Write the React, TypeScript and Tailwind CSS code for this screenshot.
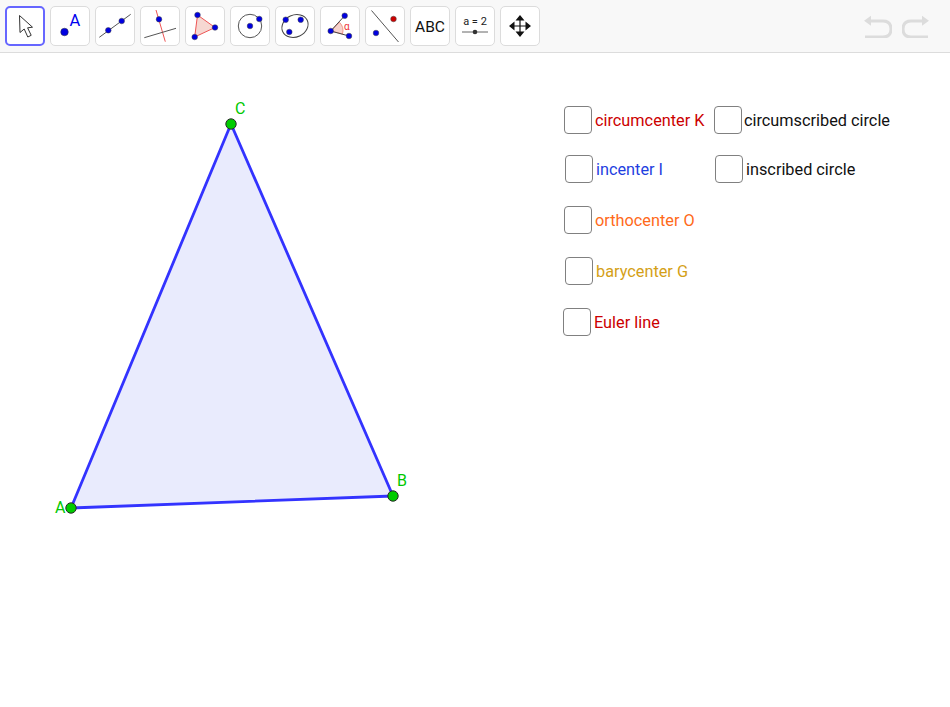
import React from "react";

const Dot = ({ x, y, r = 2.8, c = "#0000e0" }: { x: number; y: number; r?: number; c?: string }) => (
  <circle cx={x} cy={y} r={r} fill={c} stroke="#444" strokeWidth={0.5} />
);

function ToolButton({ x, active, children }: { x: number; active?: boolean; children?: React.ReactNode }) {
  return (
    <button
      className={
        active
          ? "w-10 h-10 bg-white rounded-[5px] border-2 border-[#6666ff] shrink-0 relative"
          : "w-10 h-10 bg-white rounded-[5px] border border-[#dcdcdc] shrink-0 relative"
      }
    >
      <svg className="absolute left-[-2px] top-[-2px] w-10 h-10 data-[p=n]:left-[-1px] data-[p=n]:top-[-1px]" data-p={active ? "a" : "n"} viewBox={`${x} 6 40 40`}>
        {children}
      </svg>
    </button>
  );
}

function Option({
  pos,
  color,
  children,
}: {
  pos: string;
  color: string;
  children: string;
}) {
  return (
    <label className={`absolute flex items-center text-[16.3px] leading-[26px] whitespace-nowrap ${pos} ${color}`}>
      <span className="w-7 h-7 bg-white rounded-[4px] border-[1.5px] border-[#808080] shrink-0" />
      <span className="pt-[2px]">{children}</span>
    </label>
  );
}

export default function App() {
  return (
    <div className="w-[950px] h-[707px] bg-white overflow-hidden flex flex-col font-['Roboto',sans-serif]">
      <header className="h-[53px] shrink-0 bg-[#f8f8f8] border-b border-[#dcdcdc] flex items-start pt-1.5 pl-[5px] pr-[20px]">
        <div className="flex gap-[5px]">
          <ToolButton x={5} active>
            <path d="M19.5 15.5 L20 32.5 L24.2 29 L27.8 37 L31.2 35.3 L27.6 27.8 L32.5 27.2 Z" fill="#fff" stroke="#333" strokeWidth="1" strokeLinejoin="round" />
          </ToolButton>
          <ToolButton x={50}>
            <circle cx={64.5} cy={32} r={3.8} fill="#0000e0" stroke="#333" strokeWidth={0.5} />
            <text x={69.5} y={25.5} fontFamily="Roboto, sans-serif" fontSize={16.5} fill="#0000ee">A</text>
          </ToolButton>
          <ToolButton x={95}>
            <line x1={99.3} y1={37.3} x2={130.7} y2={14.3} stroke="#555" strokeWidth={1} />
            <Dot x={108.3} y={30.3} />
            <Dot x={121.7} y={21} />
          </ToolButton>
          <ToolButton x={140}>
            <line x1={156} y1={10} x2={165.3} y2={41.7} stroke="#ee5555" strokeWidth={1} />
            <line x1={144.3} y1={37.7} x2={176} y2={28.3} stroke="#555" strokeWidth={1} />
            <Dot x={159} y={19.3} />
          </ToolButton>
          <ToolButton x={185}>
            <polygon points="197.5,15 215,27.5 194.7,37" fill="#f6d8d2" stroke="#ee5555" strokeWidth={1} />
            <Dot x={197.5} y={15} />
            <Dot x={215} y={27.5} />
            <Dot x={194.7} y={37} />
          </ToolButton>
          <ToolButton x={230}>
            <circle cx={250} cy={26} r={11.7} fill="none" stroke="#555" strokeWidth={1} />
            <Dot x={250} y={26} />
            <Dot x={259.3} y={19} />
          </ToolButton>
          <ToolButton x={275}>
            <ellipse cx={295} cy={26} rx={13.5} ry={11} transform="rotate(-25 295 26)" fill="none" stroke="#444" strokeWidth={1} />
            <Dot x={285.7} y={19.7} />
            <Dot x={300.7} y={19.7} />
            <Dot x={289.3} y={32} />
          </ToolButton>
          <ToolButton x={320}>
            <path d="M331 31 L339.5 22.3 A12 12 0 0 1 342.5 34 Z" fill="#f6d2cc" stroke="#ee7766" strokeWidth={0.7} />
            <polyline points="344.7,15.7 330.7,31 349,36" fill="none" stroke="#444" strokeWidth={1} />
            <Dot x={330.7} y={31} />
            <Dot x={344.7} y={15.7} />
            <Dot x={349} y={36} />
            <text x={344} y={29.5} fontFamily="Roboto, sans-serif" fontSize={10} fill="#ee3333">α</text>
          </ToolButton>
          <ToolButton x={365}>
            <line x1={371.5} y1={10.5} x2={398.5} y2={42} stroke="#555" strokeWidth={1} />
            <Dot x={376} y={33} />
            <Dot x={393.5} y={19} c="#cc0000" />
          </ToolButton>
          <ToolButton x={410}>
            <text x={430} y={31.5} textAnchor="middle" fontFamily="Roboto, sans-serif" fontSize={15.5} fill="#111">ABC</text>
          </ToolButton>
          <ToolButton x={455}>
            <text x={475} y={25} textAnchor="middle" fontFamily="Roboto, sans-serif" fontSize={11} fill="#222">a = 2</text>
            <line x1={462} y1={32} x2={488} y2={32} stroke="#666" strokeWidth={1} />
            <circle cx={475} cy={32} r={2.3} fill="#333" />
          </ToolButton>
          <ToolButton x={500}>
            <path d="M520 17 V35 M511 26 H529" stroke="#111" strokeWidth={1.2} />
            <path d="M520 15 L524.5 20.5 H515.5 Z M520 37 L524.5 31.5 H515.5 Z M509 26 L514.5 21.5 V30.5 Z M531 26 L525.5 21.5 V30.5 Z" fill="#111" />
          </ToolButton>
        </div>
        <div className="ml-auto flex gap-[10px] mt-[8px]">
          <svg className="w-7 h-6" viewBox="865 14 28 24">
            <path d="M871 21 H884 Q892 21 892 29 Q892 37 884 37 H866" fill="none" stroke="#dcdcdc" strokeWidth={3} />
            <path d="M865 20.7 L872 15.7 V25.7 Z" fill="#dcdcdc" />
          </svg>
          <svg className="w-7 h-6" viewBox="902 14 28 24">
            <path d="M923 21 H911 Q903 21 903 29 Q903 37 911 37 H928" fill="none" stroke="#dcdcdc" strokeWidth={3} />
            <path d="M929 20.7 L922 15.7 V25.7 Z" fill="#dcdcdc" />
          </svg>
        </div>
      </header>

      <main className="relative flex-1">
        <svg className="absolute left-0 top-0 w-[950px] h-[654px]" viewBox="0 53 950 654">
          <polygon points="71,508 393,496 231,124" fill="#e9ebfd" stroke="#3333ff" strokeWidth={2.8} strokeLinejoin="round" />
          {[
            [71, 508],
            [393, 496],
            [231, 124],
          ].map(([x, y]) => (
            <circle key={x} cx={x} cy={y} r={5.2} fill="#00cc00" stroke="#2a2a2a" strokeWidth={1} />
          ))}
          <text x={55} y={513} fontFamily="Roboto, sans-serif" fontSize={16} fill="#00c800">A</text>
          <text x={397} y={486} fontFamily="Roboto, sans-serif" fontSize={16} fill="#00c800">B</text>
          <text x={235} y={114} fontFamily="Roboto, sans-serif" fontSize={16} fill="#00c800">C</text>
        </svg>

        <Option pos="left-[564px] top-[53px] gap-[3px]" color="text-[#cc0000]">circumcenter K</Option>
        <Option pos="left-[714px] top-[53px] gap-[2px]" color="text-[#111111]">circumscribed circle</Option>
        <Option pos="left-[565px] top-[102px] gap-[3px]" color="text-[#1f3fdf]">incenter I</Option>
        <Option pos="left-[715px] top-[102px] gap-[3px]" color="text-[#111111]">inscribed circle</Option>
        <Option pos="left-[564px] top-[153px] gap-[3px]" color="text-[#ff6a1a]">orthocenter O</Option>
        <Option pos="left-[565px] top-[204px] gap-[3px]" color="text-[#d4a017]">barycenter G</Option>
        <Option pos="left-[563px] top-[255px] gap-[3px]" color="text-[#cc0000]">Euler line</Option>
      </main>
    </div>
  );
}
